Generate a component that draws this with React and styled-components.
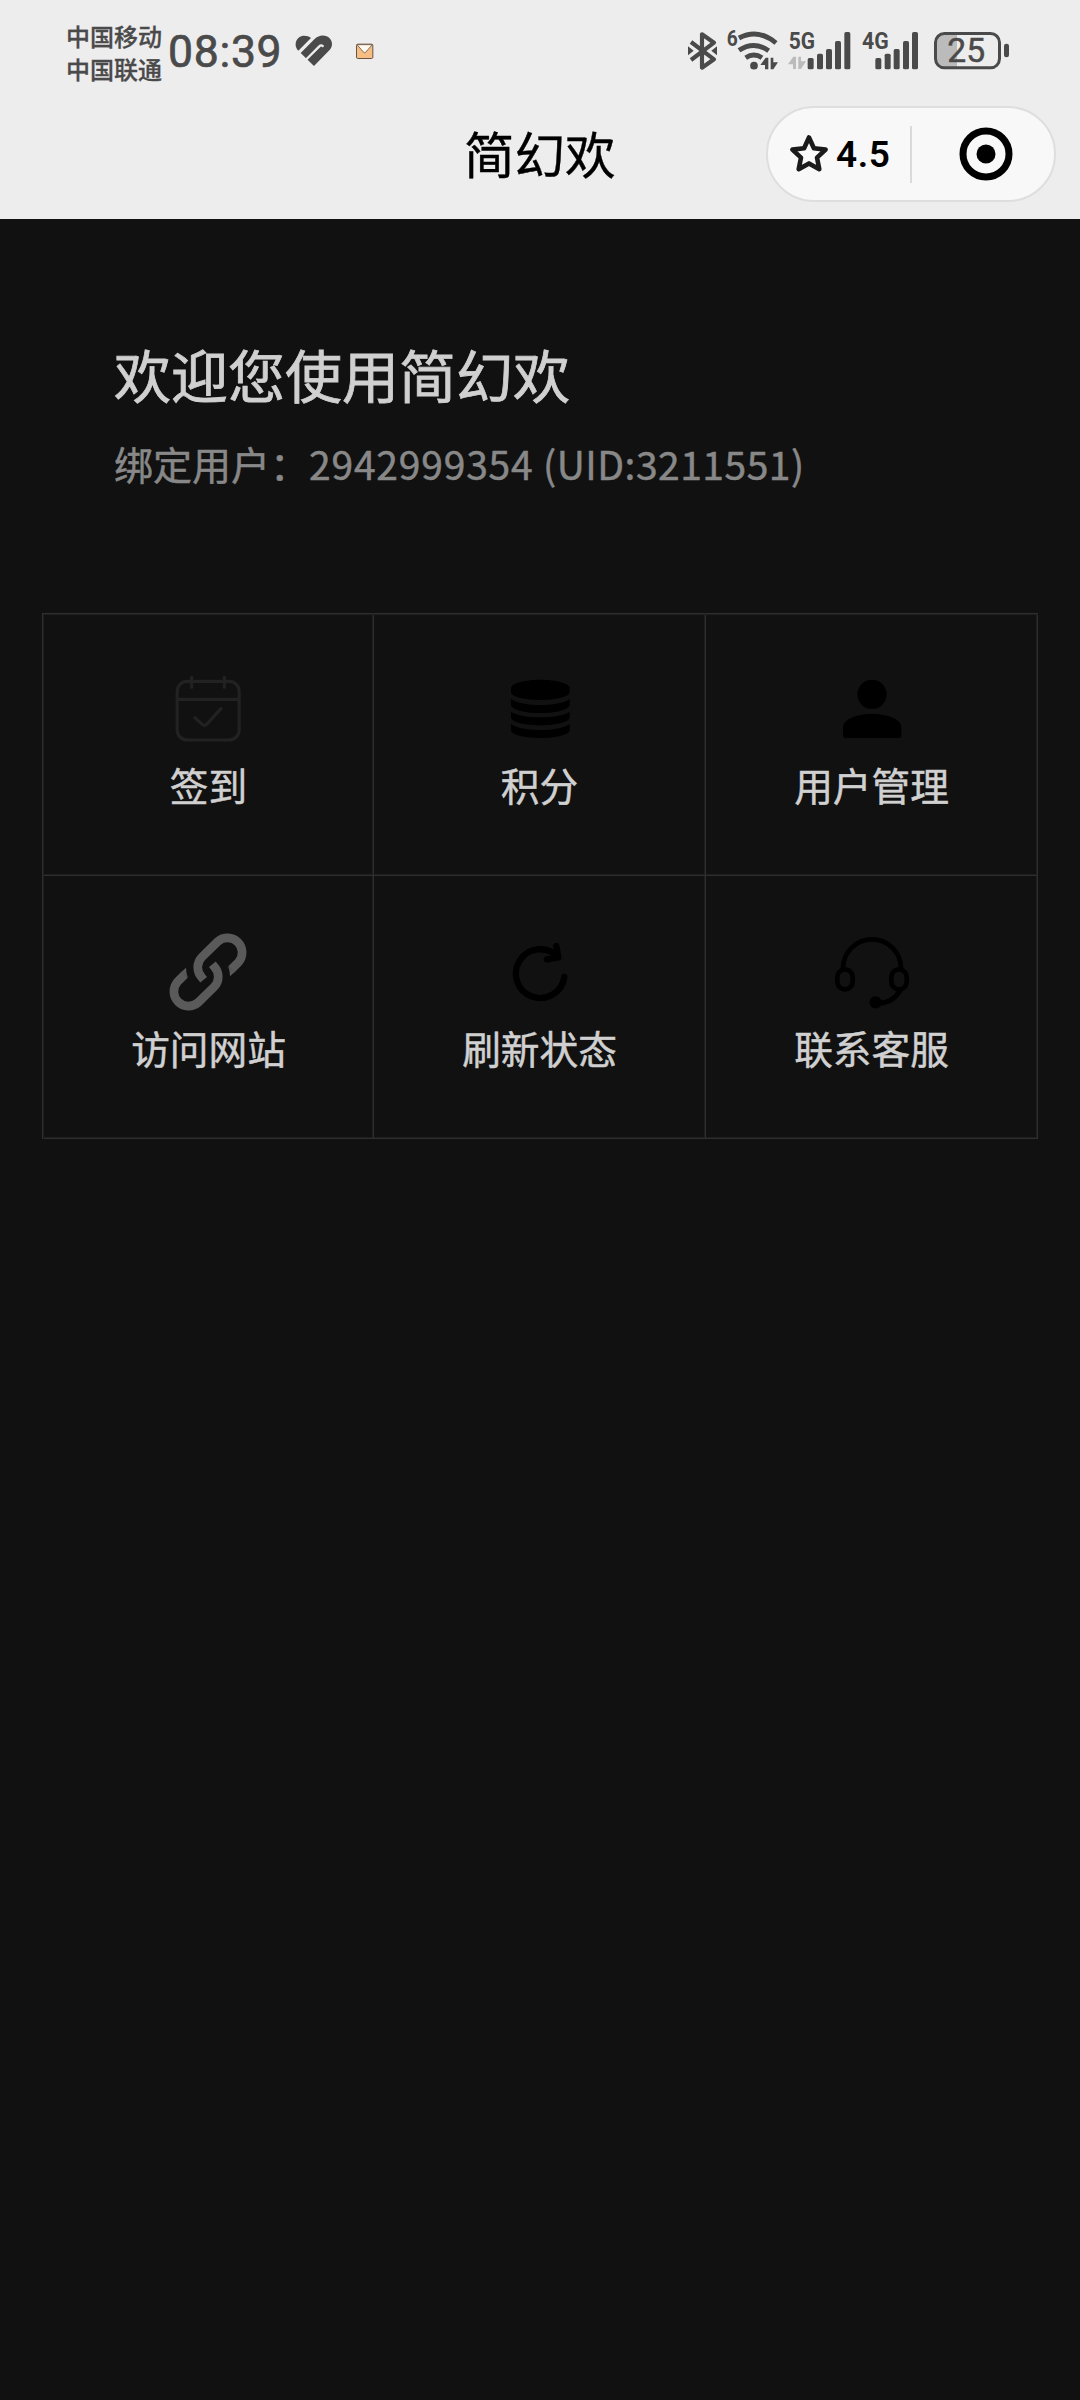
import styled, { createGlobalStyle } from "styled-components"

const GlobalStyle = createGlobalStyle`
    body {
        margin: 0;
        background: #111111;
        font-family: "Noto Sans CJK SC", sans-serif;
    }
`
const Page = styled.div`
    width: 1080px;
    min-height: 2400px;
    background: #111111;
`
const Header = styled.header`
    height: 219px;
    background: #ededed;
`
const StatusBar = styled.div`
    display: flex;
    flex-direction: row;
    align-items: flex-start;
    height: 100px;
    padding: 0 70px 0 66px;
    box-sizing: border-box;
    color: #4a4a4a;
`
const Carriers = styled.div`
    width: 102px;
    padding-top: 19px;
    font-size: 24px;
    font-weight: 500;
    line-height: 33px;
    white-space: nowrap;
    -webkit-text-stroke: 0.3px #4a4a4a;
`
const Clock = styled.div`
    width: 125px;
    padding-top: 25px;
    font-family: Roboto, sans-serif;
    font-size: 44.5px;
    font-weight: 400;
    line-height: 54px;
    letter-spacing: 0.7px;
    -webkit-text-stroke: 0.7px #4a4a4a;
`
const StatusIcon = styled.svg`
    display: block;
    flex: none;
    width: ${(props) => props.$w}px;
    height: 40px;
    margin: 30px 0 0 ${(props) => props.$gap || 0}px;
    overflow: visible;
    font-family: Roboto, sans-serif;
`
const Spacer = styled.div`
    flex: 1;
`
const NavBar = styled.div`
    display: grid;
    grid-template-columns: 1fr 152px 1fr;
    align-items: center;
    height: 108px;
    padding: 0 24px;
`
const NavTitle = styled.div`
    grid-column: 2;
    padding-bottom: 4px;
    font-size: 50.5px;
    line-height: 72px;
    color: #000;
    white-space: nowrap;
    -webkit-text-stroke: 0.4px #000;
`
const Capsule = styled.div`
    justify-self: end;
    display: flex;
    align-items: center;
    width: 290px;
    height: 96px;
    box-sizing: border-box;
    border: 2px solid #dedede;
    border-radius: 48px;
    background: #f8f8f8;
`
const Rate = styled.div`
    display: flex;
    align-items: center;
    width: 144px;
    height: 57px;
    padding-left: 19px;
    box-sizing: border-box;
    border-right: 2px solid #dadada;
    font-family: Roboto, sans-serif;
    font-size: 37px;
    font-weight: 600;
    letter-spacing: 0.6px;
    color: #000;
    svg {
        flex: none;
        margin-right: 5px;
    }
`
const Close = styled.div`
    flex: 1;
    display: flex;
    justify-content: center;
    padding-left: 5px;
`
const Welcome = styled.section`
    height: 394px;
    padding: 113px 114px 0;
    box-sizing: border-box;
    white-space: nowrap;
`
const Title = styled.h1`
    margin: 0;
    font-size: 57px;
    font-weight: 400;
    line-height: 82px;
    color: #d0d0d0;
    -webkit-text-stroke: 0.8px #d0d0d0;
`
const Account = styled.p`
    margin: 21px 0 0;
    font-size: 39px;
    line-height: 56px;
    color: #888888;
    -webkit-text-stroke: 0.5px #888888;
`
const Uid = styled.span`
    letter-spacing: ${(props) => props.$spacing}px;
`
const Grid = styled.div`
    display: grid;
    grid-template-columns: 330px 332px 332px;
    grid-template-rows: 261px 263px;
    width: 996px;
    margin-left: 42px;
    padding: 1px 0 0 1px;
    box-sizing: border-box;
    border-top: 1px solid #2e2e2e;
    border-left: 1px solid #2e2e2e;
    box-shadow: inset 1px 1px #1e1e1e;
`
const Cell = styled.div`
    display: flex;
    flex-direction: column;
    align-items: center;
    padding-top: 49px;
    border-right: 1px solid #2e2e2e;
    border-bottom: 1px solid #2e2e2e;
    box-shadow: inset -1px -1px #1e1e1e;
`
const CellIcon = styled.svg`
    display: block;
    width: 91px;
    height: 90px;
`
const Label = styled.div`
    margin-top: ${(props) => (props.$row === 0 ? 3 : 5)}px;
    font-size: 38.7px;
    line-height: 54px;
    color: #d0d0d0;
    -webkit-text-stroke: 0.5px #d0d0d0;
`

function Bars({ xs }) {
    const tops = [144, 131, 117, 93, 66]
    return xs.map((x, i) => (
        <rect key={x} x={x} y={tops[i]} width="18" height={178 - tops[i]} rx="5" fill="#4a4a4a" />
    ))
}

function StatusIcons() {
    return (
        <>
            <StatusIcon $w={30} viewBox="51 60 90 120" fill="none">
                <path d="M63 96 132 148 96 173V73L132 98 63 150" stroke="#4a4a4a" strokeWidth="12.5" strokeLinejoin="round" />
                <path d="M54 109 71 122 54 136ZM141 109 124 122 141 136Z" fill="#4a4a4a" />
            </StatusIcon>
            <StatusIcon $w={53} $gap={9} viewBox="168 60 159 120" fill="none">
                <g stroke="#4a4a4a" strokeWidth="14.5">
                    <path d="M207 84Q264 54 318 99" />
                    <path d="M207 121Q252 91 296 122" />
                    <path d="M227 143Q252 127 276 143" />
                </g>
                <circle cx="252" cy="167" r="11.5" fill="#4a4a4a" />
                <path d="M295 143V178H285V165H271L287 143ZM302 143H310V157H324L310 178H302Z" fill="#4a4a4a" />
                <text x="170" y="108" fontSize="68" fontWeight="700" fill="#4a4a4a" textLength="33" lengthAdjust="spacingAndGlyphs">6</text>
            </StatusIcon>
            <StatusIcon $w={63} $gap={9} viewBox="354 60 189 120">
                <text x="356" y="118" fontSize="70" fontWeight="700" fill="#4a4a4a" textLength="79" lengthAdjust="spacingAndGlyphs">5G</text>
                <path d="M378 140V177H369V163H354L370 140ZM385 140H393V154H408L393 177H385Z" fill="#bbbbbb" />
                <Bars xs={[413, 441, 468, 495, 523]} />
            </StatusIcon>
            <StatusIcon $w={59} $gap={10} viewBox="573 60 177 120">
                <text x="576" y="118" fontSize="70" fontWeight="700" fill="#4a4a4a" textLength="80" lengthAdjust="spacingAndGlyphs">4G</text>
                <Bars xs={[616, 644, 671, 699, 726]} />
            </StatusIcon>
            <StatusIcon $w={77} $gap={13} viewBox="789 60 231 120" fill="none">
                <path d="M861 70H824Q796 70 796 98V146Q796 174 824 174H861Z" fill="#bbbbbb" />
                <rect x="796.5" y="70.5" width="192" height="103" rx="27" stroke="#4a4a4a" strokeWidth="9" />
                <rect x="1002" y="101" width="15" height="41" rx="7" fill="#4a4a4a" />
                <text x="832" y="157" fontSize="101" fill="#4a4a4a" stroke="#4a4a4a" strokeWidth="1.5">25</text>
            </StatusIcon>
        </>
    )
}

const items = [
    {
        label: "签到",
        viewBox: "399 192 273 270",
        icon: (
            <g fill="none" stroke="#222222" strokeWidth="9.5" strokeLinecap="round" strokeLinejoin="round">
                <rect x="441.5" y="244" width="186" height="176" rx="30" />
                <path d="M442 298H627M485 232V262M583 232V262M494 353 517 373Q524 379 531 372L573 326" />
            </g>
        ),
    },
    {
        label: "积分",
        viewBox: "372 192 273 270",
        icon: (
            <>
                <path d="M423 264C423 250 463 239 511 239S599 250 599 264V276C599 290 559 300 511 300S423 290 423 276Z" />
                <path d="M423 297C440 310 475 315 511 315S582 310 599 297V314C599 328 559 339 511 339S423 328 423 314Z" />
                <path d="M423 335C440 347 475 352 511 352S582 347 599 335V352C599 366 559 376 511 376S423 366 423 352Z" />
                <path d="M423 372C440 385 475 390 511 390S582 385 599 372V390C599 404 559 414 511 414S423 404 423 390Z" />
            </>
        ),
    },
    {
        label: "用户管理",
        viewBox: "378 192 273 270",
        icon: (
            <>
                <circle cx="516" cy="283" r="44" />
                <path d="M429 382C429 358 470 342 516 342S604 358 604 382V406Q604 414 596 414H437Q429 414 429 406Z" />
            </>
        ),
    },
    {
        label: "访问网站",
        viewBox: "399 165 273 270",
        icon: [0, 180].map((angle) => (
            <g key={angle} transform={`rotate(${angle} 534 306)`}>
                <path
                    d="M521 329 516 323A44 44 0 0 1 516 261L564 214A44 44 0 0 1 626 276L604 298"
                    fill="none"
                    stroke="#5a5a5a"
                    strokeWidth="26"
                />
                <path d="M594 289 614 306 600 319Q600 302 594 289Z" fill="#5a5a5a" />
            </g>
        )),
    },
    {
        label: "刷新状态",
        viewBox: "372 165 273 270",
        icon: (
            <g fill="none" stroke="#000" strokeWidth="19" strokeLinecap="round" strokeLinejoin="round">
                <path d="M583 321A73 73 0 1 1 562 259" />
                <path d="M559 228 565 262 531 268" />
            </g>
        ),
    },
    {
        label: "联系客服",
        viewBox: "378 165 273 270",
        icon: (
            <>
                <g fill="none" stroke="#000" strokeWidth="14">
                    <path d="M429 297V295A87 87 0 0 1 603 295V297" />
                    <rect x="412" y="298" width="46" height="60" rx="23" />
                    <rect x="574" y="298" width="46" height="60" rx="23" />
                    <path d="M601 360Q580 398 535 400" />
                </g>
                <circle cx="527" cy="397" r="18.5" />
            </>
        ),
    },
]

export default function App() {
    return (
        <Page>
            <GlobalStyle />
            <Header>
                <StatusBar>
                    <Carriers>
                        <div>中国移动</div>
                        <div>中国联通</div>
                    </Carriers>
                    <Clock>08:39</Clock>
                    <StatusIcon $w={42} viewBox="729 60 126 120" fill="none">
                        <path d="M745 122C733 110 735 92 746 83 757 74 773 76 783 84Z" fill="#4a4a4a" />
                        <path d="M752 129 793 88C808 73 828 74 839 85 849 96 848 111 838 121L792 168Z" fill="#4a4a4a" />
                        <path d="M764 153 808 109Q813 104 818 108" stroke="#ededed" strokeWidth="7" strokeLinecap="round" />
                    </StatusIcon>
                    <StatusIcon $w={20} $gap={20} viewBox="915 60 60 120">
                        <rect x="919.5" y="102.5" width="49" height="43" rx="4" fill="#f6bd85" stroke="#6a5440" strokeWidth="3" />
                        <path d="M921 104H967L947 127Q944 130 941 127Z" fill="#fff8f0" stroke="#6a5440" strokeWidth="2.5" />
                    </StatusIcon>
                    <Spacer />
                    <StatusIcons />
                </StatusBar>
                <NavBar>
                    <NavTitle>简幻欢</NavTitle>
                    <Capsule>
                        <Rate>
                            <svg width="44" height="44" viewBox="0 0 44 44" fill="none">
                                <path
                                    d="M22 5.5 26.9 16.2 38.6 17.6 30 25.6 32.3 37.2 22 31.4 11.7 37.2 14 25.6 5.4 17.6 17.1 16.2Z"
                                    stroke="#1a1a1a"
                                    strokeWidth="4.6"
                                    strokeLinejoin="round"
                                />
                            </svg>
                            4.5
                        </Rate>
                        <Close>
                            <svg width="54" height="54" viewBox="0 0 54 54">
                                <circle cx="27" cy="27" r="23" fill="none" stroke="#000" strokeWidth="7" />
                                <circle cx="27" cy="27" r="9.5" />
                            </svg>
                        </Close>
                    </Capsule>
                </NavBar>
            </Header>
            <Welcome>
                <Title>欢迎您使用简幻欢</Title>
                <Account>
                    绑定用户：<Uid $spacing={0.8}>2942999354 </Uid><Uid $spacing={0.5}>(UID:3211551)</Uid>
                </Account>
            </Welcome>
            <Grid>
                {items.map((item, i) => (
                    <Cell key={item.label}>
                        <CellIcon viewBox={item.viewBox}>{item.icon}</CellIcon>
                        <Label $row={Math.floor(i / 3)}>{item.label}</Label>
                    </Cell>
                ))}
            </Grid>
        </Page>
    )
}
